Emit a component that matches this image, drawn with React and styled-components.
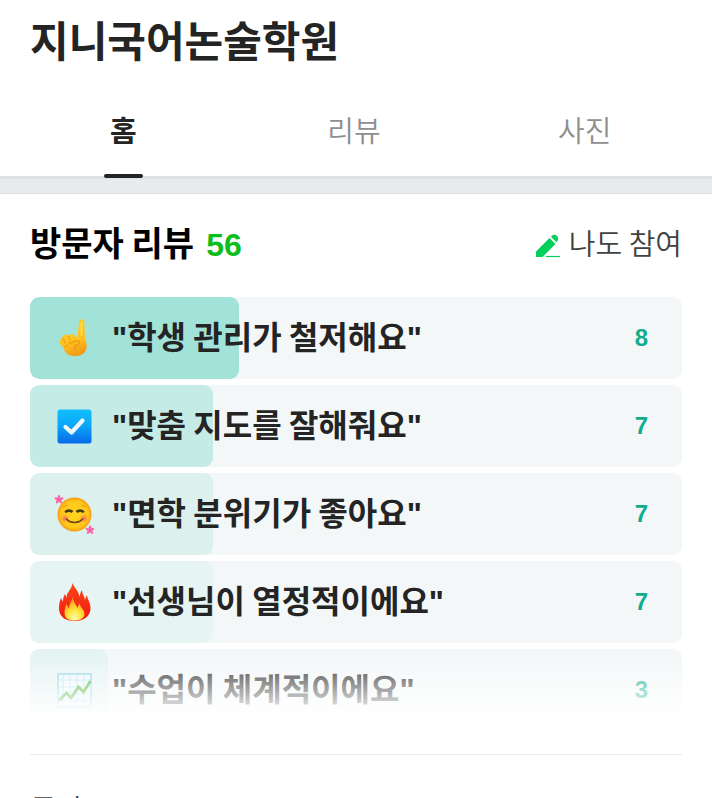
import React from 'react';
import styled, { createGlobalStyle } from 'styled-components';

const GlobalStyle = createGlobalStyle`
  * {
    box-sizing: border-box;
  }

  html {
    overflow: hidden;
  }

  body {
    margin: 0;
    background: #fff;
    color: #242424;
    font-family: 'Noto Sans CJK KR', sans-serif;
  }
`;

const FingerIcon = () => (
  <Emoji viewBox="0 0 40 40" aria-hidden="true">
    <defs>
      <linearGradient id="skin" x1="0.2" y1="0" x2="0.5" y2="1">
        <stop offset="0" stopColor="#ffd030" />
        <stop offset="0.65" stopColor="#ffc01c" />
        <stop offset="1" stopColor="#f39a18" />
      </linearGradient>
    </defs>
    <path d="M23.500 20 25 4c.3-3.600 5-3.600 5.400 0L31 22c4 6 1.500 15.500-8.500 16C15 38.500 10 35 9.500 29c-4-1-5.500-8-1.500-8.500C8 16.500 12 15.500 14 18c2-3.500 7-2 7.500 1Z" fill="url(#skin)" />
    <path d="M8 20.500c2 1 3 3 3 5M14 18c1.500 1.500 2 3 2 5M9.500 29c2 0 4-1 4.500-3" fill="none" stroke="#e39a18" strokeWidth="1" />
    <path d="M15 25c4 0 6-3 9-2 3 1 1 4-2 4.500-2 .5-1 3-1 4.500" fill="none" stroke="#e9960f" strokeWidth="1.300" strokeLinecap="round" />
    <path d="M27.500 5v12" stroke="#ffe05a" strokeWidth="1.600" strokeLinecap="round" />
  </Emoji>
);

const CheckIcon = () => (
  <Emoji viewBox="0 0 40 40" aria-hidden="true">
    <defs>
      <linearGradient id="blue" x1="0" y1="0" x2="0" y2="1">
        <stop offset="0" stopColor="#12c0fb" />
        <stop offset="0.500" stopColor="#0aa4f8" />
        <stop offset="1" stopColor="#0868e8" />
      </linearGradient>
    </defs>
    <rect x="3.500" y="3.500" width="34" height="34" rx="2.500" fill="url(#blue)" />
    <path d="m11.500 21 6 5.500 11-12" fill="none" stroke="#f0f7fc" strokeWidth="4.200" strokeLinecap="round" strokeLinejoin="round" />
  </Emoji>
);

const Flower = ({ x, y }) => (
  <g transform={`translate(${x} ${y})`} fill="#fb67a8">
    {[0, 72, 144, 216, 288].map((angle) => (
      <ellipse key={angle} cy="-2.600" rx="1.300" ry="2" transform={`rotate(${angle})`} />
    ))}
    <circle r="1.200" fill="#f9559c" />
  </g>
);

const SmileIcon = () => (
  <Emoji viewBox="0 0 40 40" aria-hidden="true">
    <defs>
      <radialGradient id="face">
        <stop offset="0" stopColor="#ffd81e" />
        <stop offset="0.800" stopColor="#ffc61a" />
        <stop offset="1" stopColor="#f79a10" />
      </radialGradient>
      <radialGradient id="cheek">
        <stop offset="0" stopColor="#ff5b72" />
        <stop offset="1" stopColor="#ff8a42" stopOpacity="0" />
      </radialGradient>
    </defs>
    <circle cx="20.500" cy="20.500" r="17" fill="url(#face)" />
    <circle cx="11" cy="24.500" r="4.500" fill="url(#cheek)" />
    <circle cx="30" cy="24.500" r="4.500" fill="url(#cheek)" />
    <path d="M11.500 18.500c1-2.500 5-2.500 7-.5M22.500 18c2-2 6-2 7 .5" fill="none" stroke="#4a3b12" strokeWidth="2.800" />
    <path d="m9 13 4-2M28 11l4 2" stroke="#e0912a" strokeWidth="1" strokeLinecap="round" />
    <path d="M12.500 25c3 4.500 13 4.500 16 0" fill="none" stroke="#70401a" strokeWidth="1.500" strokeLinecap="round" />
    <Flower x="5" y="5.500" />
    <Flower x="36" y="36" />
  </Emoji>
);

const FireIcon = () => (
  <Emoji viewBox="0 0 40 40" aria-hidden="true">
    <defs>
      <linearGradient id="flame" x1="0" y1="0" x2="0" y2="1">
        <stop offset="0" stopColor="#f64a1c" />
        <stop offset="1" stopColor="#f5160c" />
      </linearGradient>
      <radialGradient id="core" cx="0.500" cy="0.900" r="0.800">
        <stop offset="0" stopColor="#fffab8" />
        <stop offset="0.400" stopColor="#ffe83c" />
        <stop offset="1" stopColor="#ff921a" />
      </radialGradient>
    </defs>
    <path d="M18.500 1c1 4 6 7 7 14 .5-3 1-5 2.500-7 0 4 2.500 6 3 10 .5-2 1-3 2-5 0 4 4 8 3.500 14-.5 8-7.500 12-15.500 12S5.500 36 5 27c0-4 .5-8 2-11l2 4c0-3 .5-6 2-8l1.500 4c0-6 5-8 6-15Z" fill="url(#flame)" />
    <path d="M19 14c-.5 5 3 8 4.500 12l2-5c0 4 5 6 5 11 0 4.500-5 6.500-10 6.500S10.500 37 10.500 31c0-4 1-6 2-9l2.500 5c0-5 3-8 4-13Z" fill="url(#core)" />
  </Emoji>
);

const ChartIcon = () => (
  <Emoji viewBox="0 0 40 40" aria-hidden="true">
    <rect x="4" y="4" width="33" height="33" fill="#eef8fb" stroke="#7fd0e2" strokeWidth="1.500" />
    <path d="M9 4v32M16 4v32M23 4v32M30 4v32M4 10h32M4 17h32M4 24h32M4 31h32" stroke="#b4e1ec" strokeWidth="1" />
    <path d="m5.500 30 7-7 4.500 5 7.500-11 5 5 7-11" fill="none" stroke="#42b022" strokeWidth="2.800" />
  </Emoji>
);

const PenIcon = () => (
  <PenSvg viewBox="0 0 26 24" aria-hidden="true">
    <path d="M1 17.500 14.500 4l6 6L7.500 23H1Z" fill="#03cf5d" />
    <path d="m16 2.800 1-1c3.500-3 8 2 5.500 5L21.500 8.300Z" fill="#03cf5d" />
    <path d="M11 22.500h14" stroke="#03cf5d" strokeWidth="1.200" />
  </PenSvg>
);

const tabs = ['홈', '리뷰', '사진'];

const reviews = [
  { text: '학생 관리가 철저해요', count: 8, share: 32, color: '#a1e2d9', Icon: FingerIcon },
  { text: '맞춤 지도를 잘해줘요', count: 7, share: 28, color: '#c4ebe5', Icon: CheckIcon },
  { text: '면학 분위기가 좋아요', count: 7, share: 28, color: '#dcf0ee', Icon: SmileIcon },
  { text: '선생님이 열정적이에요', count: 7, share: 28, color: '#e7f4f4', Icon: FireIcon },
  { text: '수업이 체계적이에요', count: 3, share: 12, color: '#e3f3f2', Icon: ChartIcon },
];

const App = () => {
  return (
    <>
      <GlobalStyle />
      <Header>
        <Title>지니국어논술학원</Title>
        <Tabs>
          {tabs.map((tab, i) => (
            <Tab key={tab} href="#" $active={i === 0}>
              <TabLabel $active={i === 0}>{tab}</TabLabel>
            </Tab>
          ))}
        </Tabs>
      </Header>
      <Divider />
      <Section>
        <SectionHead>
          <SectionTitle>
            방문자 리뷰<Total>56</Total>
          </SectionTitle>
          <JoinButton type="button">
            <PenIcon />
            나도 참여
          </JoinButton>
        </SectionHead>
        <ReviewList>
          {reviews.map(({ text, count, share, color, Icon }) => (
            <Review key={text}>
              <Bar $color={color} style={{ width: `${share}%` }} />
              <Icon />
              <ReviewText>
                <Quote>"</Quote>
                {text}
                <Quote>"</Quote>
              </ReviewText>
              <Count>{count}</Count>
            </Review>
          ))}
        </ReviewList>
        <Topics>
          <TopicTitle>동아</TopicTitle>
        </Topics>
      </Section>
    </>
  );
};

const Header = styled.header`
  background: #fff;
`;

const Title = styled.h1`
  margin: 0;
  padding: 8px 30px 0;
  font-size: 42px;
  line-height: 62px;
  font-weight: 700;
`;

const Tabs = styled.nav`
  display: flex;
  margin-top: 16px;
  padding: 0 12px 0 8px;
`;

const Tab = styled.a`
  flex: 1;
  display: flex;
  justify-content: center;
  height: 90px;
  font-size: 29px;
  line-height: 86px;
  text-decoration: none;
  font-weight: ${({ $active }) => ($active ? 700 : 350)};
  color: ${({ $active }) => ($active ? '#242424' : '#8f8f8f')};
`;

const TabLabel = styled.span`
  position: relative;
  height: 90px;
  padding: 0 6px;

  &::after {
    content: '';
    display: ${({ $active }) => ($active ? 'block' : 'none')};
    position: absolute;
    left: 0;
    right: 0;
    bottom: -2px;
    height: 4px;
    border-radius: 2px;
    background: #242424;
  }
`;

const Divider = styled.div`
  height: 18px;
  background: #e7ebee;
  border-top: 3px solid #dfe3e6;
  border-bottom: 1px solid #dde1e4;
`;

const Section = styled.section`
  padding: 22px 30px 0;
`;

const SectionHead = styled.div`
  display: flex;
  justify-content: space-between;
  align-items: center;
  height: 52px;
`;

const SectionTitle = styled.h2`
  display: flex;
  align-items: flex-start;
  gap: 12px;
  height: 52px;
  margin: 0;
  font-size: 34px;
  line-height: 52px;
  font-weight: 700;
  color: #000;
`;

const Total = styled.span`
  font-family: 'Liberation Sans', sans-serif;
  font-size: 32px;
  line-height: 58px;
  color: #0dbd19;
`;

const JoinButton = styled.button`
  display: flex;
  align-items: center;
  gap: 8px;
  padding: 0;
  border: 0;
  background: none;
  font-family: inherit;
  font-size: 29px;
  font-weight: 350;
  line-height: 52px;
  color: #424242;
`;

const PenSvg = styled.svg`
  width: 26px;
  height: 24px;
  margin-top: 8px;
`;

const ReviewList = styled.ul`
  position: relative;
  display: flex;
  flex-direction: column;
  gap: 6px;
  height: 424px;
  margin: 29px 0 0;
  padding: 0;
  list-style: none;
  overflow: hidden;

  &::after {
    content: '';
    position: absolute;
    left: 0;
    right: 0;
    bottom: 0;
    height: 72px;
    background: linear-gradient(rgba(255, 255, 255, 0), #fff 95%);
  }
`;

const Review = styled.li`
  position: relative;
  flex: none;
  display: flex;
  align-items: center;
  height: 82px;
  padding: 0 34px 0 24px;
  border-radius: 9px;
  background: #f3f7f8;
  overflow: hidden;
`;

const Bar = styled.div`
  position: absolute;
  top: 0;
  left: 0;
  bottom: 0;
  border-radius: 9px;
  background: ${({ $color }) => $color};
`;

const Emoji = styled.svg`
  position: relative;
  flex: none;
  width: 40px;
  height: 40px;
`;

const ReviewText = styled.span`
  position: relative;
  flex: 1;
  margin-left: 18px;
  padding-bottom: 4px;
  font-size: 32px;
  line-height: 48px;
  font-weight: 700;
`;

const Quote = styled.span`
  font-family: 'Liberation Sans', sans-serif;
`;

const Count = styled.em`
  position: relative;
  font-family: 'Liberation Sans', sans-serif;
  font-size: 24px;
  font-style: normal;
  font-weight: 700;
  color: #10ac8d;
`;

const Topics = styled.div`
  margin-top: 33px;
  padding-top: 31px;
  border-top: 1px solid #ebebeb;
`;

const TopicTitle = styled.h3`
  margin: 0;
  font-size: 29px;
  line-height: 44px;
  font-weight: 350;
  color: #424242;
`;

export default App;
